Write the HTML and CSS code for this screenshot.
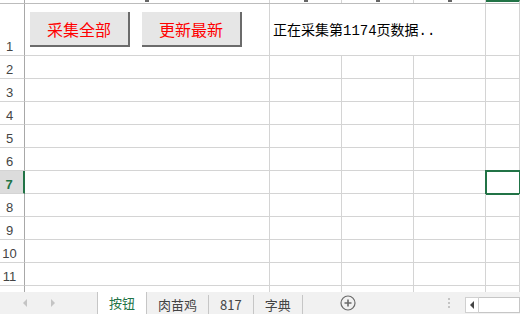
FILE: index.html
```html
<!DOCTYPE html>
<html lang="zh-CN">
<head>
    <meta charset="UTF-8">
    <title>采集</title>
    <link rel="stylesheet" href="styles.css">
</head>
<body>
    <div class="sheet">
        <div class="row colhead">
            <div class="rh"></div>
            <div class="ch"><span class="tick"></span></div>
            <div class="ch"><span class="tick"></span></div>
            <div class="ch"><span class="tick"></span></div>
            <div class="ch"><span class="tick"></span></div>
            <div class="ch ch-active"></div>
        </div>

        <div class="row row-first">
            <div class="rh">1</div>
            <div class="cell btn-cell">
                <button class="btn">采集全部</button>
                <button class="btn">更新最新</button>
            </div>
            <div class="cell status">正在采集第1174页数据..</div>
            <div class="cell"></div>
        </div>

        <div class="row"><div class="rh">2</div><div class="cell"></div><div class="cell"></div><div class="cell"></div><div class="cell"></div><div class="cell"></div></div>
        <div class="row"><div class="rh">3</div><div class="cell"></div><div class="cell"></div><div class="cell"></div><div class="cell"></div><div class="cell"></div></div>
        <div class="row"><div class="rh">4</div><div class="cell"></div><div class="cell"></div><div class="cell"></div><div class="cell"></div><div class="cell"></div></div>
        <div class="row"><div class="rh">5</div><div class="cell"></div><div class="cell"></div><div class="cell"></div><div class="cell"></div><div class="cell"></div></div>
        <div class="row"><div class="rh">6</div><div class="cell"></div><div class="cell"></div><div class="cell"></div><div class="cell"></div><div class="cell"></div></div>
        <div class="row"><div class="rh rh-active">7</div><div class="cell"></div><div class="cell"></div><div class="cell"></div><div class="cell"></div><div class="cell selected"></div></div>
        <div class="row"><div class="rh">8</div><div class="cell"></div><div class="cell"></div><div class="cell"></div><div class="cell"></div><div class="cell"></div></div>
        <div class="row"><div class="rh">9</div><div class="cell"></div><div class="cell"></div><div class="cell"></div><div class="cell"></div><div class="cell"></div></div>
        <div class="row"><div class="rh">10</div><div class="cell"></div><div class="cell"></div><div class="cell"></div><div class="cell"></div><div class="cell"></div></div>
        <div class="row"><div class="rh">11</div><div class="cell"></div><div class="cell"></div><div class="cell"></div><div class="cell"></div><div class="cell"></div></div>
        <div class="row row-partial"><div class="rh"></div><div class="cell"></div><div class="cell"></div><div class="cell"></div><div class="cell"></div><div class="cell"></div></div>

        <div class="tabbar">
            <div class="tab-nav">
                <span class="arrow arrow-left"></span>
                <span class="arrow arrow-right"></span>
            </div>
            <div class="tab tab-active">按钮</div>
            <div class="tab">肉苗鸡</div>
            <div class="tab">817</div>
            <div class="tab">字典</div>
            <div class="add-sheet">
                <svg width="16" height="16" viewBox="0 0 16 16">
                    <circle cx="8" cy="8" r="7" fill="none" stroke="#6a6a6a" stroke-width="1.2"/>
                    <path d="M8 4.5v7M4.5 8h7" stroke="#6a6a6a" stroke-width="1.6"/>
                </svg>
            </div>
            <div class="splitter">
                <span></span><span></span><span></span>
            </div>
            <div class="hscroll">
                <div class="scroll-btn"><span class="arrow-dark"></span></div>
                <div class="scroll-track"></div>
            </div>
        </div>
    </div>
</body>
</html>
```

FILE: styles.css
```css
body {
    margin: 0;
    width: 520px;
    height: 314px;
    overflow: hidden;
    background-color: white;
    font-family: "Liberation Sans", "Noto Sans CJK SC", sans-serif;
}

.sheet {
    display: flex;
    flex-direction: column;
    height: 314px;
}

.row {
    display: grid;
    grid-template-columns: 25px 245px 72px 72px 72px 1fr;
    height: 23px;
    flex-shrink: 0;
}

.row > div {
    box-sizing: border-box;
}

.colhead {
    height: 4px;
    border-bottom: 1px solid #bcbcbc;
    box-sizing: border-box;
    overflow: hidden;
}

.ch {
    border-right: 1px solid #d4d4d4;
}

.tick {
    display: block;
    width: 4px;
    height: 2px;
    margin: 0 auto;
    background-color: #666;
}

.ch-active {
    border-top: 2px solid #217346;
}

.colhead .rh {
    border-bottom: none;
}

.rh {
    display: flex;
    align-items: flex-end;
    justify-content: center;
    padding: 0 5px 1px 0;
    border-right: 1px solid #a8a8a8;
    border-bottom: 1px solid #d4d4d4;
    font-size: 13px;
    line-height: 14px;
    color: #444;
}

.rh-active {
    background-color: #dcdcdc;
    border-right: 2px solid #217346;
    color: #217346;
    font-weight: bold;
}

.cell {
    border-right: 1px solid #d4d4d4;
    border-bottom: 1px solid #d4d4d4;
}

.row-first {
    height: 52px;
}

.row-partial {
    height: 6px;
}

.row-partial .cell,
.row-partial .rh {
    border-bottom: none;
}

.btn-cell {
    display: flex;
    align-items: flex-start;
    gap: 12px;
    padding: 8px 0 0 5px;
}

.btn {
    width: 100px;
    height: 35px;
    padding: 0;
    box-sizing: border-box;
    background-color: #e6e6e6;
    border: none;
    border-right: 2px solid #6b6b6b;
    border-bottom: 2px solid #6b6b6b;
    color: #f00;
    font-family: "Noto Sans CJK SC", sans-serif;
    font-size: 16px;
    line-height: 20px;
}

.status {
    grid-column: span 3;
    padding: 19px 0 0 3px;
    white-space: nowrap;
    font-family: "Liberation Mono", "Noto Sans CJK SC", monospace;
    font-size: 14px;
    line-height: 16px;
    color: #000;
}

.selected {
    outline: 2px solid #217346;
    outline-offset: -1px;
}

.tabbar {
    display: flex;
    align-items: stretch;
    height: 22px;
    background-color: #f1f1f1;
    font-family: "Noto Sans CJK SC", sans-serif;
    font-size: 13px;
    color: #444;
}

.tab-nav {
    width: 97px;
    display: flex;
    align-items: center;
    padding-left: 23px;
    gap: 24px;
    box-sizing: border-box;
}

.arrow {
    width: 0;
    height: 0;
    border-top: 4px solid transparent;
    border-bottom: 4px solid transparent;
}

.arrow-left {
    border-right: 4px solid #c4c4c4;
}

.arrow-right {
    border-left: 4px solid #c4c4c4;
}

.tab {
    display: flex;
    align-items: center;
    padding: 0 11px;
    margin-top: 3px;
    border-right: 1px solid #c6c6c6;
    line-height: 16px;
}

.tab-active {
    margin-top: 0;
    background-color: white;
    border-left: 1px solid #c6c6c6;
    color: #217346;
}

.add-sheet {
    display: flex;
    align-items: center;
    margin-left: 37px;
}

.splitter {
    display: flex;
    flex-direction: column;
    justify-content: center;
    gap: 2px;
    margin-left: 92px;
}

.splitter span {
    width: 2px;
    height: 2px;
    background-color: #c4c4c4;
}

.hscroll {
    display: flex;
    align-items: stretch;
    margin: 5px 0 1px 15px;
    flex: 1;
}

.scroll-btn {
    width: 14px;
    display: flex;
    align-items: center;
    justify-content: center;
    background-color: white;
    border: 1px solid #d0d0d0;
    box-sizing: border-box;
}

.arrow-dark {
    width: 0;
    height: 0;
    border-top: 4px solid transparent;
    border-bottom: 4px solid transparent;
    border-right: 4px solid #444;
}

.scroll-track {
    flex: 1;
    background-color: white;
    border: 1px solid #c6c6c6;
    border-left: none;
}
```
